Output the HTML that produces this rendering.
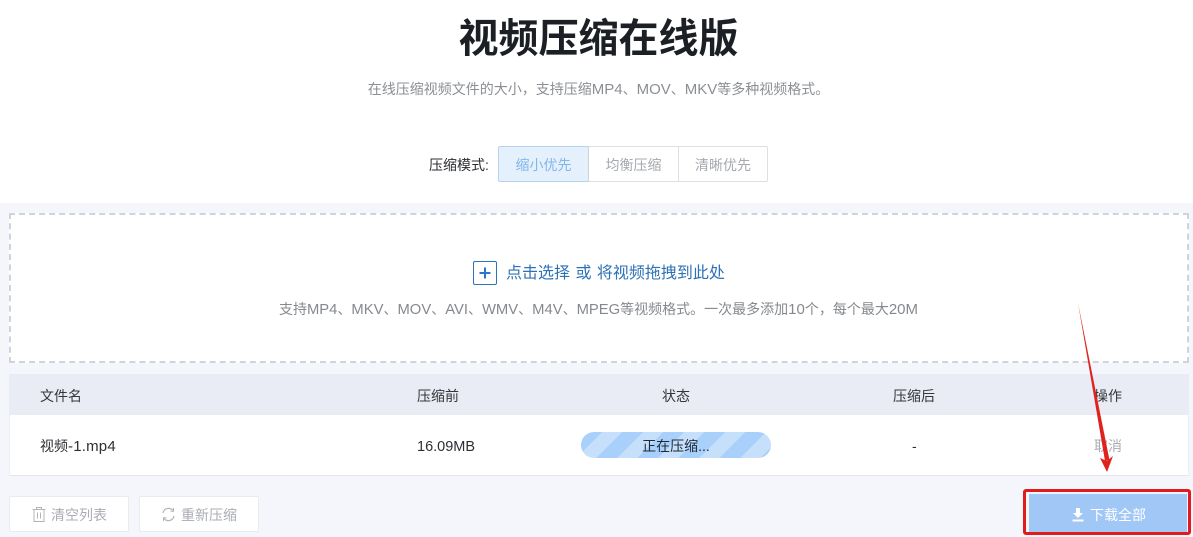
<!DOCTYPE html>
<html><head><meta charset="utf-8">
<style>
html,body{margin:0;padding:0;}
body{width:1193px;height:537px;overflow:hidden;position:relative;background:#fff;font-family:"Liberation Sans","Noto Sans CJK SC",sans-serif;color:#333;}
.a{position:absolute;white-space:nowrap;}
.c{text-align:center;}
.l{font-size:14.800px;}
.m{font-size:15px;}
.seg{position:absolute;top:146px;height:36px;line-height:36px;text-align:center;font-size:14px;color:#a5a9ae;border:1px solid #dcdfe3;box-sizing:border-box;background:#fff;}
.btn{position:absolute;top:496px;height:36px;line-height:36px;width:120px;box-sizing:border-box;background:#fff;border:1px solid #e9ebef;border-radius:2px;font-size:14px;color:#a9adb3;}
.th{position:absolute;top:386px;font-size:14px;line-height:20px;color:#33363a;white-space:nowrap;}
.td{position:absolute;top:436px;font-size:14px;line-height:20px;color:#2c2f33;white-space:nowrap;}
</style></head><body>
<div class="a c" style="left:0;width:1197px;top:12px;font-size:40px;line-height:54px;font-weight:700;color:#1c2024;">视频压缩在线版</div>
<div class="a c" style="left:0;width:1197px;top:79px;font-size:14px;line-height:20px;color:#8b8f94;">在线压缩视频文件的大小，支持压缩<span class="m">MP4</span>、<span class="m">MOV</span>、<span class="m">MKV</span>等多种视频格式。</div>
<div class="a" style="left:429px;top:155px;font-size:14px;line-height:20px;color:#2a2d31;">压缩模式:</div>
<div class="seg" style="left:498px;width:91px;background:#e4f0fc;color:#83b6ea;border-color:#b5d2ee;border-radius:2px 0 0 2px;">缩小优先</div>
<div class="seg" style="left:588px;width:91px;border-left-color:#cfd3d8;">均衡压缩</div>
<div class="seg" style="left:678px;width:90px;border-radius:0 2px 2px 0;">清晰优先</div>

<div class="a" style="left:0;top:203px;width:1193px;height:334px;background:#f4f6fb;"></div>
<div class="a" style="left:9px;top:213px;width:1180px;height:150px;box-sizing:border-box;background:#fff;border:2px dashed #ced3dc;"></div>
<div class="a" style="left:473px;top:261px;width:24px;height:24px;box-sizing:border-box;border:1px solid #2f72b8;border-radius:2px;background:#fff;">
<svg width="22" height="22" style="display:block"><path d="M11 5.500V16.500M5.500 11H16.500" stroke="#2a75d0" stroke-width="2" fill="none"/></svg></div>
<div class="a" style="left:506px;top:263px;font-size:16px;line-height:22px;color:#2e72b6;word-spacing:1px;">点击选择 或 将视频拖拽到此处</div>
<div class="a c" style="left:0;width:1197px;top:299px;font-size:14px;line-height:20px;color:#85898e;">支持<span class="l">MP4</span>、<span class="l">MKV</span>、<span class="l">MOV</span>、<span class="l">AVI</span>、<span class="l">WMV</span>、<span class="l">M4V</span>、<span class="l">MPEG</span>等视频格式。一次最多添加<span class="m">10</span>个，每个最大<span class="m">20M</span></div>

<div class="a" style="left:9px;top:374px;width:1180px;height:102px;background:#fff;border-bottom:1px solid #e4e6ea;border-left:1px solid #eceef3;border-right:1px solid #eceef3;box-sizing:border-box;"></div>
<div class="a" style="left:9px;top:374px;width:1180px;height:41px;background:#e9ecf4;"></div>
<div class="th" style="left:40px;">文件名</div>
<div class="th" style="left:417px;">压缩前</div>
<div class="th" style="left:662px;">状态</div>
<div class="th" style="left:893px;">压缩后</div>
<div class="th" style="left:1094px;">操作</div>
<div class="td" style="left:40px;">视频<span style="font-size:15px;letter-spacing:.2px;">-1.mp4</span></div>
<div class="td" style="left:417px;top:437px;font-size:14.500px;">16.09MB</div>
<div class="a c" style="left:581px;top:432px;width:190px;height:26px;line-height:28px;border-radius:13px;font-size:14px;color:#1f2a38;background:repeating-linear-gradient(135deg,#a8d0fb 0,#a8d0fb 15px,#c6e0fc 15px,#c6e0fc 29px);">正在压缩...</div>
<div class="td" style="left:912px;">-</div>
<div class="td" style="left:1094px;color:#a9adb3;">取消</div>

<div class="btn" style="left:9px;padding-left:41px;">清空列表
<svg class="a" style="left:21px;top:9px;" width="16" height="17" viewBox="0 0 16 17" fill="none" stroke="#b0b4b9" stroke-width="1"><path d="M1.500 3.500H14.500M5.500 3.500V1.500H10.500V3.500M3 3.500V15.500H13V3.500M6.500 6.500V12.500M9.500 6.500V12.500"/></svg></div>
<div class="btn" style="left:139px;padding-left:41px;">重新压缩
<svg class="a" style="left:21px;top:10px;" width="15" height="15" viewBox="0 0 15 15" fill="none" stroke="#b0b4b9" stroke-width="1.200"><path d="M2 6A5.700 5.700 0 0 1 12 3.500M13 9A5.700 5.700 0 0 1 3 11.500"/><path d="M12.500 1V4.200H9.500M2.500 14V10.800H5.500" stroke-width="1"/></svg></div>

<div class="a" style="left:1029px;top:494px;width:158px;height:40px;background:#a1c7f6;"></div>
<svg class="a" style="left:1071px;top:507px;" width="14" height="16" viewBox="0 0 14 16"><path d="M5 1H9V6H12L7 11 2 6H5ZM1.500 12.500H12.500V14.500H1.500Z" fill="#fff"/></svg>
<div class="a" style="left:1090px;top:505px;font-size:14px;line-height:20px;color:#fff;">下载全部</div>
<div class="a" style="left:1023px;top:489px;width:168px;height:46px;box-sizing:border-box;border:3px solid #e11b1b;border-radius:3px;"></div>
<svg class="a" style="left:1060px;top:295px;" width="70" height="190" viewBox="0 0 70 190">
<path d="M18 8L49.500 165 45 166Z" fill="#e0221c"/>
<path d="M47 177L40 163 47 166 53 161Z" fill="#e0221c"/>
</svg>
</body></html>
